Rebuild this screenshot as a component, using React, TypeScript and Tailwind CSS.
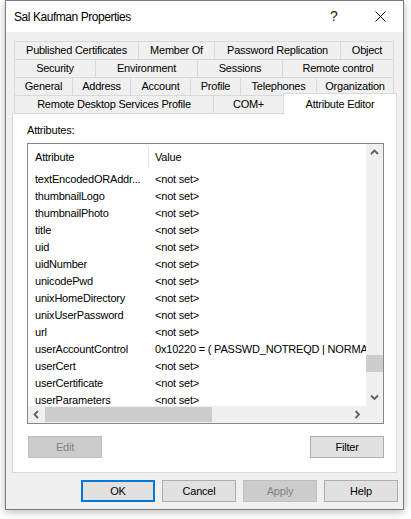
import React from "react";

type Tab = { label: string; w: number };

const tabRows: Tab[][] = [
  [
    { label: "Published Certificates", w: 124 },
    { label: "Member Of", w: 76 },
    { label: "Password Replication", w: 126 },
    { label: "Object", w: 54 },
  ],
  [
    { label: "Security", w: 81 },
    { label: "Environment", w: 102 },
    { label: "Sessions", w: 85 },
    { label: "Remote control", w: 112 },
  ],
  [
    { label: "General", w: 58 },
    { label: "Address", w: 58 },
    { label: "Account", w: 60 },
    { label: "Profile", w: 50 },
    { label: "Telephones", w: 76 },
    { label: "Organization", w: 78 },
  ],
];

const rows: [string, string][] = [
  ["textEncodedORAddr...", "<not set>"],
  ["thumbnailLogo", "<not set>"],
  ["thumbnailPhoto", "<not set>"],
  ["title", "<not set>"],
  ["uid", "<not set>"],
  ["uidNumber", "<not set>"],
  ["unicodePwd", "<not set>"],
  ["unixHomeDirectory", "<not set>"],
  ["unixUserPassword", "<not set>"],
  ["url", "<not set>"],
  ["userAccountControl", "0x10220 = ( PASSWD_NOTREQD | NORMAL_ACCOUNT | DONT_EXPIRE_PASSWD )"],
  ["userCert", "<not set>"],
  ["userCertificate", "<not set>"],
  ["userParameters", "<not set>"],
];

const Chevron = ({ dir }: { dir: "up" | "down" | "left" | "right" }) => {
  const pts = {
    up: "1,5 4.5,1.5 8,5",
    down: "1,1.5 4.5,5 8,1.5",
    left: "5,1 1.5,4.5 5,8",
    right: "1.5,1 5,4.5 1.5,8",
  }[dir];
  const vertical = dir === "up" || dir === "down";
  return (
    <svg width={vertical ? 9 : 7} height={vertical ? 7 : 9} viewBox={vertical ? "0 0 9 7" : "0 0 7 9"}>
      <polyline points={pts} fill="none" stroke="#606060" strokeWidth="1.8" />
    </svg>
  );
};

const Button = ({
  label,
  disabled,
  focused,
}: {
  label: string;
  disabled?: boolean;
  focused?: boolean;
}) => (
  <div
    className={`w-[74px] h-[22px] flex items-center justify-center text-[11px] tracking-[-0.2px] ${
      disabled
        ? "bg-[#cccccc] border border-[#bfbfbf] text-[#838383]"
        : focused
        ? "bg-[#e1e1e1] border-2 border-[#0078d7] text-black"
        : "bg-[#e1e1e1] border border-[#adadad] text-black"
    }`}
  >
    {label}
  </div>
);

export default function App() {
  return (
    <div className="w-[411px] h-[519px] bg-white overflow-hidden font-['Liberation_Sans',Arial,sans-serif] text-black">
      <div className="ml-[5px] w-[399px] h-[510px] border border-[#7a7a7a] bg-[#f0f0f0] shadow-[0_2px_8px_rgba(0,0,0,0.28)] flex flex-col">
        {/* Title bar */}
        <div className="h-[31px] bg-white flex items-center">
          <div className="pl-[8px] flex-1 text-[12px] tracking-[-0.45px]">Sal Kaufman Properties</div>
          <div className="w-[46px] h-full flex items-center justify-center text-[14px] font-light text-[#222]">?</div>
          <div className="w-[46px] h-full flex items-center justify-center">
            <svg width="11" height="11" viewBox="0 0 11 11">
              <path d="M0.5 0.5 L10.5 10.5 M10.5 0.5 L0.5 10.5" stroke="#000" strokeWidth="1" />
            </svg>
          </div>
        </div>

        {/* Tabs */}
        <div className="mt-[9px] ml-[6px] w-[385px]">
          {tabRows.map((row, ri) => (
            <div key={ri} className="flex ml-[2px] h-[18px]">
              {row.map((t, i) => (
                <div
                  key={t.label}
                  style={{ width: t.w }}
                  className={`h-[18px] border-t border-l border-[#d9d9d9] flex items-center justify-center text-[11px] tracking-[-0.25px] whitespace-nowrap ${
                    i === row.length - 1 ? "border-r" : ""
                  }`}
                >
                  {t.label}
                </div>
              ))}
            </div>
          ))}
          <div className="flex ml-[2px] h-[18px]">
            <div className="w-[199px] h-[18px] border-t border-l border-[#d9d9d9] flex items-center justify-center text-[11px] tracking-[-0.25px]">
              Remote Desktop Services Profile
            </div>
            <div className="w-[70px] h-[18px] border-t border-l border-[#d9d9d9] flex items-center justify-center text-[11px] tracking-[-0.25px]">
              COM+
            </div>
            <div className="relative z-10 -mt-[2px] w-[114px] h-[21px] shrink-0 bg-white border-t border-l border-r border-[#d9d9d9] flex justify-center pt-[2px] text-[11px] tracking-[-0.25px]">
              Attribute Editor
            </div>
          </div>
        </div>

        {/* Panel */}
        <div className="ml-[6px] w-[385px] h-[360px] bg-white border border-[#d9d9d9] flex flex-col">
          <div className="mt-[10px] ml-[14px] h-[13px] leading-[13px] text-[11px] tracking-[-0.2px]">Attributes:</div>
          <div className="mt-[6px] ml-[14px] w-[357px] h-[281px] border border-[#828790] flex flex-col">
            <div className="flex flex-1 min-h-0">
              <div className="flex-1 min-w-0 overflow-hidden text-[11px] tracking-[-0.2px]">
                <div className="h-[27px] flex items-center">
                  <div className="w-[120px] pl-[7px]">Attribute</div>
                  <div className="w-px h-[21px] bg-[#e5e5e5]" />
                  <div className="pl-[6px]">Value</div>
                </div>
                {rows.map(([a, v]) => (
                  <div key={a} className="h-[17px] flex items-center whitespace-nowrap">
                    <div className="w-[121px] shrink-0 pl-[7px] overflow-hidden">{a}</div>
                    <div className="pl-[6px]">{v}</div>
                  </div>
                ))}
              </div>
              <div className="w-[17px] bg-[#f0f0f0] flex flex-col">
                <div className="h-[17px] flex items-center justify-center">
                  <Chevron dir="up" />
                </div>
                <div className="h-[194px]" />
                <div className="h-[17px] bg-[#cdcdcd]" />
                <div className="flex-1" />
                <div className="h-[17px] flex items-center justify-center">
                  <Chevron dir="down" />
                </div>
              </div>
            </div>
            <div className="h-[17px] flex bg-[#f0f0f0]">
              <div className="w-[17px] flex items-center justify-center">
                <Chevron dir="left" />
              </div>
              <div className="w-[167px] my-[1px] bg-[#cdcdcd]" />
              <div className="flex-1" />
              <div className="w-[17px] flex items-center justify-center">
                <Chevron dir="right" />
              </div>
              <div className="w-[17px]" />
            </div>
          </div>
          <div className="mt-[12px] mx-[12px] ml-[15px] flex justify-between">
            <Button label="Edit" disabled />
            <Button label="Filter" />
          </div>
        </div>

        {/* Dialog buttons */}
        <div className="mt-[7px] pr-[5px] flex justify-end gap-[7px]">
          <Button label="OK" focused />
          <Button label="Cancel" />
          <Button label="Apply" disabled />
          <Button label="Help" />
        </div>
      </div>
    </div>
  );
}
